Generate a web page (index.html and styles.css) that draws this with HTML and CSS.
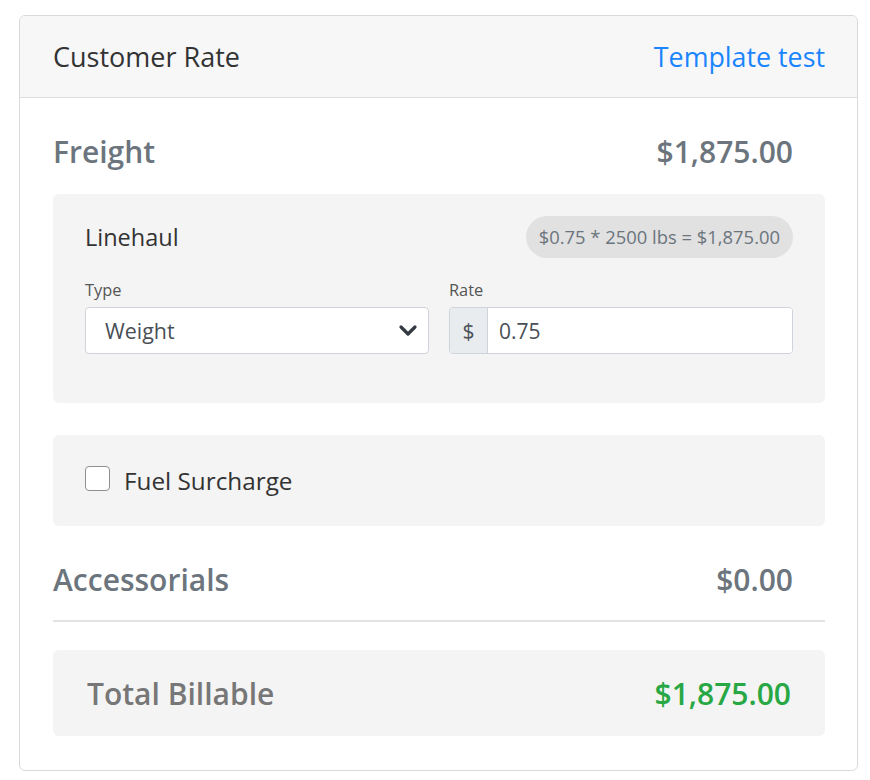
FILE: index.html
```html
<!DOCTYPE html>
<html>
<head>
<meta charset="utf-8">
<link rel="stylesheet" href="styles.css">
</head>
<body>
<div class="card">
  <div class="card-header">
    <span class="header-title">Customer Rate</span>
    <a class="header-link">Template test</a>
  </div>
  <div class="card-body">
    <div class="section-head freight">
      <span>Freight</span>
      <span>$1,875.00</span>
    </div>
    <div class="box linehaul">
      <div class="line-row">
        <span class="line-title">Linehaul</span>
        <span class="pill">$0.75 * 2500 lbs = $1,875.00</span>
      </div>
      <div class="fields">
        <div class="field">
          <label class="label">Type</label>
          <div class="select">
            <span>Weight</span>
            <svg class="chev" width="20" height="14" viewBox="0 0 20 14"><path d="M3 3 L10 10 L17 3" fill="none" stroke="#343a40" stroke-width="3.2" stroke-linecap="round" stroke-linejoin="round"/></svg>
          </div>
        </div>
        <div class="field">
          <label class="label">Rate</label>
          <div class="input-group">
            <span class="prepend">$</span>
            <span class="input">0.75</span>
          </div>
        </div>
      </div>
    </div>
    <div class="box fuel">
      <span class="checkbox"></span>
      <span class="fuel-label">Fuel Surcharge</span>
    </div>
    <div class="section-head access">
      <span>Accessorials</span>
      <span>$0.00</span>
    </div>
    <div class="rule"></div>
    <div class="box total">
      <span class="total-label">Total Billable</span>
      <span class="total-value">$1,875.00</span>
    </div>
  </div>
</div>
</body>
</html>
```
FILE: styles.css
```css
* { box-sizing: border-box; }
body {
  margin: 0;
  background: #fff;
  font-family: "Open Sans", "Noto Sans", sans-serif;
}
.card {
  margin: 15px 0 0 19px;
  width: 839px;
  height: 756px;
  border: 1px solid #d9d9d9;
  border-radius: 6px;
  overflow: hidden;
}
.card-header {
  height: 82px;
  padding: 0 32px 0 33px;
  display: flex;
  justify-content: space-between;
  align-items: center;
  background: #f7f7f7;
  border-bottom: 1px solid #dcdcdc;
}
.header-title {
  font-size: 27px;
  color: #333;
}
.header-link {
  font-size: 26.8px;
  color: #1a85ff;
}
.card-body {
  padding: 0 32px 0 33px;
}
.section-head {
  display: flex;
  justify-content: space-between;
  padding-right: 32px;
  font-size: 30px;
  font-weight: 600;
  color: #6c757d;
  line-height: 38px;
}
.freight { margin-top: 35px; margin-bottom: 23px; }
.box {
  background: #f4f4f4;
  border-radius: 6px;
}
.linehaul {
  padding: 22px 32px 49px 32px;
}
.line-row {
  display: flex;
  justify-content: space-between;
  align-items: center;
  height: 42px;
}
.line-title {
  font-size: 23.5px;
  color: #333;
}
.pill {
  background: #e1e1e1;
  color: #6c757d;
  font-size: 18.4px;
  height: 42px;
  line-height: 42px;
  padding: 0 13px;
  border-radius: 21px;
}
.fields {
  display: grid;
  grid-template-columns: 1fr 1fr;
  gap: 20px;
  margin-top: 21px;
}
.label {
  display: block;
  font-size: 16.4px;
  line-height: 22px;
  color: #555;
  margin-bottom: 6px;
}
.select {
  height: 47px;
  background: #fff;
  border: 1px solid #ced4da;
  border-radius: 4px;
  display: flex;
  align-items: center;
  justify-content: space-between;
  padding: 0 10px 0 19px;
  font-size: 21.4px;
  color: #495057;
}
.chev { display: block; }
.input-group {
  height: 47px;
  display: flex;
  border: 1px solid #ced4da;
  border-radius: 4px;
  overflow: hidden;
}
.prepend {
  width: 38px;
  background: #e9ecef;
  border-right: 1px solid #ced4da;
  display: flex;
  align-items: center;
  justify-content: center;
  font-size: 21px;
  color: #495057;
}
.input {
  flex: 1;
  background: #fff;
  display: flex;
  align-items: center;
  padding-left: 11px;
  font-size: 21px;
  color: #495057;
}
.fuel {
  margin-top: 32px;
  height: 91px;
  padding-left: 32px;
  display: flex;
  align-items: center;
}
.checkbox {
  width: 25px;
  height: 25px;
  border: 1.5px solid #8f8f8f;
  border-radius: 4px;
  background: #fff;
  margin-right: 14px;
  margin-bottom: 4px;
}
.fuel-label {
  font-size: 24.3px;
  color: #333;
}
.access { margin-top: 35px; }
.rule {
  height: 2px;
  background: #e3e3e3;
  margin-top: 21px;
}
.total {
  margin-top: 28px;
  height: 86px;
  padding: 0 34px;
  display: flex;
  justify-content: space-between;
  align-items: center;
  font-size: 30px;
  font-weight: 600;
}
.total-label { color: #777; }
.total-value { color: #28a745; }
```
